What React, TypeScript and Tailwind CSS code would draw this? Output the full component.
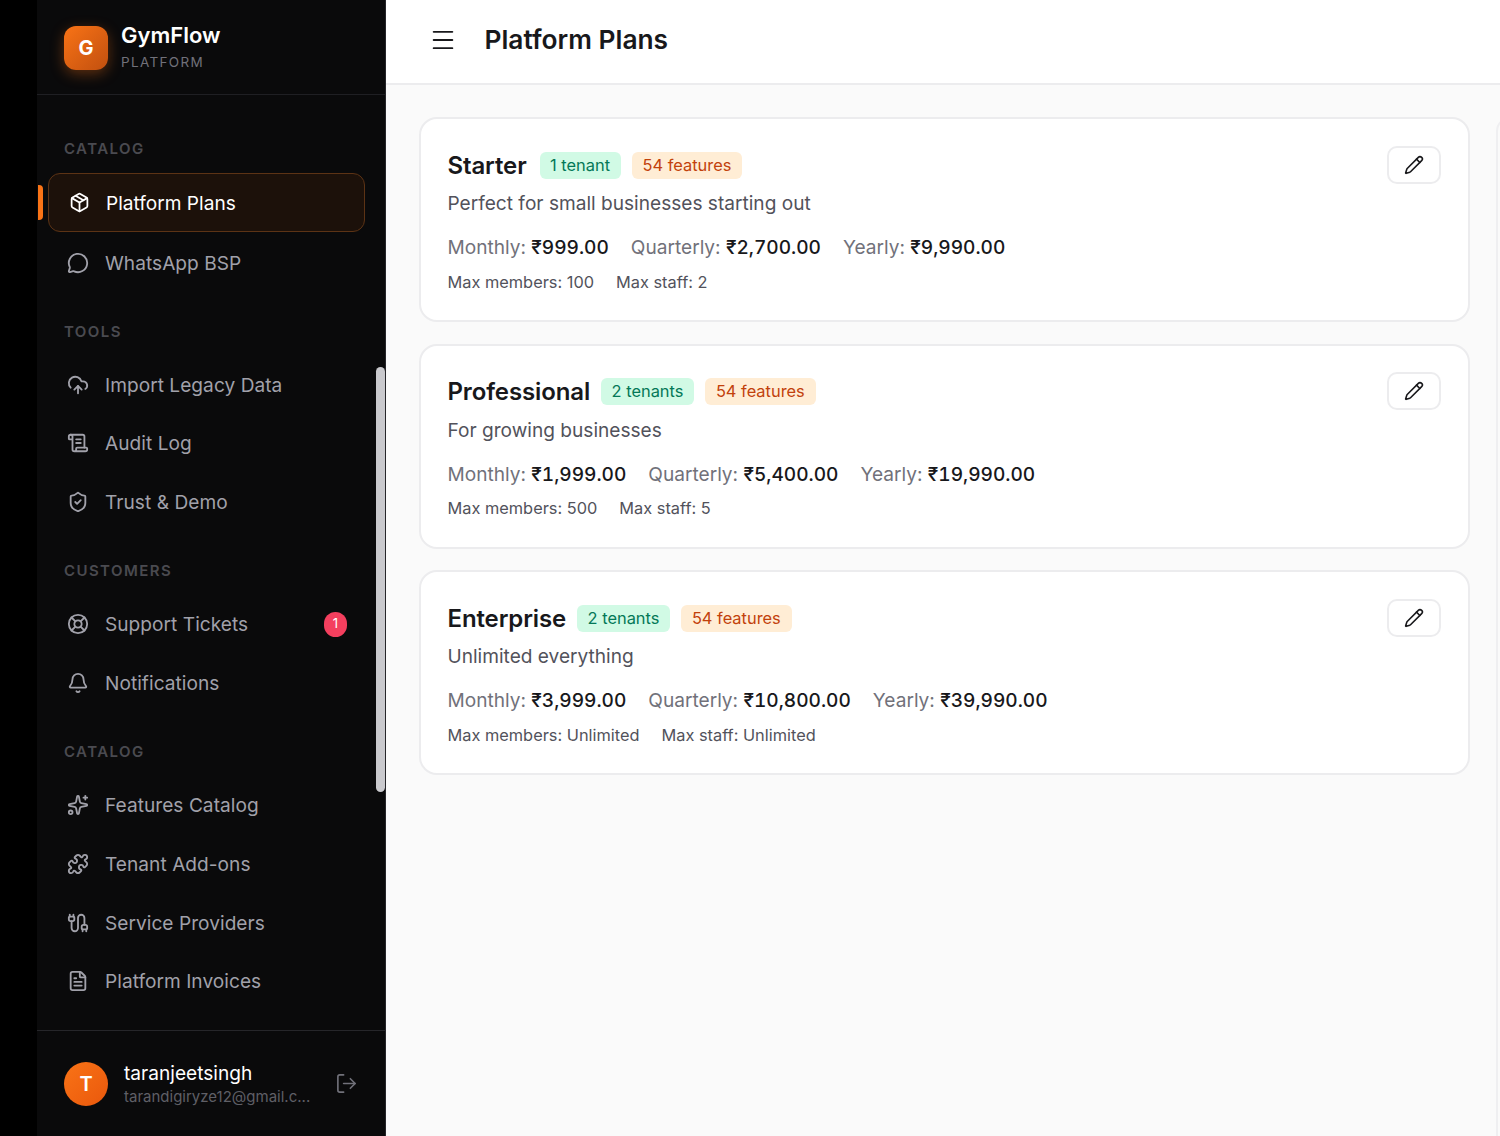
import { Package, MessageCircle, CloudUpload, ScrollText, ShieldCheck, LifeBuoy, Bell, Sparkles, Puzzle, Cable, FileText, LogOut, Pencil, Menu } from "lucide-react";

const font = { fontFamily: "Inter, sans-serif" };

function Label({ children, className }: { children: string; className: string }) {
  return <div className={"pl-[27px] text-[15px] leading-[20px] font-semibold tracking-[0.095em] text-[#4a4a50] " + className}>{children}</div>;
}

function Item({ icon: Icon, label, badge }: { icon: any; label: string; badge?: string }) {
  return (
    <div className="mx-[11px] flex h-[58.6px] w-[317px] shrink-0 items-center pl-[19px] pr-[18px] text-[#a1a1aa]">
      <Icon size={22} strokeWidth={2} className="shrink-0" />
      <span className="ml-[16px] flex-1 text-[19.1px] leading-[28px] tracking-[0.002em]">{label}</span>
      {badge && <span className="flex h-[25px] w-[23px] items-center justify-center rounded-full bg-[#f43f5e] text-[13px] text-white">{badge}</span>}
    </div>
  );
}

function Plan({ name, tenants, desc, m, q, y, mem, staff }: { name: string; tenants: string; desc: string; m: string; q: string; y: string; mem: string; staff: string }) {
  return (
    <div className="relative h-[205px] w-[1051px] shrink-0 rounded-[18px] border-2 border-[#ececee] bg-white pl-[27px] pt-[31.5px]">
      <div className="flex h-[29px] items-center">
        <span className="text-[24px] font-semibold leading-[29px] tracking-[-0.005em] text-[#18181b]">{name}</span>
        <span className={(name === "Starter" ? "ml-[13px]" : "ml-[11px]") + " flex h-[27px] items-center rounded-[6px] bg-[#d1fae5] px-[10.5px] text-[16.4px] text-[#047857]"}>{tenants}</span>
        <span className="ml-[11px] flex h-[27px] items-center rounded-[6px] bg-[#ffedd5] px-[11px] text-[16.4px] text-[#c2410c]">54 features</span>
      </div>
      <div className="mt-[9.8px] text-[19.1px] leading-[28px] text-[#52525b]">{desc}</div>
      <div className="mt-[16px] flex gap-[22px] text-[19.1px] leading-[28px] text-[#71717a]">
        <span>Monthly: <span className="font-medium tabular-nums text-[#18181b]">{m}</span></span>
        <span>Quarterly: <span className="font-medium tabular-nums text-[#18181b]">{q}</span></span>
        <span>Yearly: <span className="font-medium tabular-nums text-[#18181b]">{y}</span></span>
      </div>
      <div className="mt-[8.7px] flex gap-[22px] text-[16.35px] leading-[24px] text-[#52525b]">
        <span>Max members: {mem}</span>
        <span>Max staff: {staff}</span>
      </div>
      <button className="absolute right-[27px] top-[26.7px] flex h-[38px] w-[54px] items-center justify-center rounded-[10px] border-2 border-[#ececee] bg-white text-[#18181b]">
        <Pencil size={20} strokeWidth={1.9} />
      </button>
    </div>
  );
}

export default function App() {
  return (
    <div style={font} className="flex h-[1136px] w-[1500px] overflow-hidden bg-black">
      <div className="w-[37px] shrink-0 bg-black" />
      <aside className="relative flex h-full w-[348.5px] shrink-0 flex-col border-r border-[#26262a] bg-[#0a0a0b]">
        <div className="flex h-[95px] shrink-0 items-center border-b border-[#1f1f23] pl-[27px]">
          <div className="mt-[1px] flex h-[44px] w-[44px] items-center justify-center rounded-[12px] bg-gradient-to-br from-[#f97316] to-[#c2500f] text-[20px] font-bold text-white shadow-[0_4px_14px_rgba(249,115,22,0.35)]">G</div>
          <div className="ml-[13px] mt-[-3px]">
            <div className="text-[22px] font-semibold leading-[28px] text-white">GymFlow</div>
            <div className="mt-[4px] text-[13.5px] leading-[18px] tracking-[0.1em] text-[#71717a]">PLATFORM</div>
          </div>
        </div>
        <div className="flex flex-1 flex-col overflow-hidden pt-[43.5px]">
          <Label className="mb-[14.5px]">CATALOG</Label>
          <div className="relative mx-[11px] flex h-[59px] w-[317px] shrink-0 items-center rounded-[12px] border border-[#5c3315] bg-[#1c110a] pl-[19.5px] text-white">
            <div className="absolute left-[-11px] top-[11px] h-[35px] w-[5px] rounded-r-[4px] bg-[#f97316]" />
            <Package size={21} strokeWidth={2} />
            <span className="ml-[16.5px] text-[19.1px] leading-[28px]">Platform Plans</span>
          </div>
          <div className="mt-[2px]">
            <Item icon={MessageCircle} label="WhatsApp BSP" />
          </div>
          <Label className="mb-[14px] mt-[29px]">TOOLS</Label>
          <Item icon={CloudUpload} label="Import Legacy Data" />
          <Item icon={ScrollText} label="Audit Log" />
          <Item icon={ShieldCheck} label="Trust & Demo" />
          <Label className="mb-[14px] mt-[29.5px]">CUSTOMERS</Label>
          <Item icon={LifeBuoy} label="Support Tickets" badge="1" />
          <Item icon={Bell} label="Notifications" />
          <Label className="mb-[14px] mt-[30px]">CATALOG</Label>
          <Item icon={Sparkles} label="Features Catalog" />
          <Item icon={Puzzle} label="Tenant Add-ons" />
          <Item icon={Cable} label="Service Providers" />
          <Item icon={FileText} label="Platform Invoices" />
        </div>
        <div className="flex h-[106px] shrink-0 items-center border-t border-[#26262a] pl-[27px]">
          <div className="flex h-[44px] w-[44px] items-center justify-center rounded-full bg-gradient-to-br from-[#f97316] to-[#ea580c] text-[20px] font-semibold text-white">T</div>
          <div className="ml-[16px] w-[190px]">
            <div className="text-[19.1px] leading-[26px] text-white">taranjeetsingh</div>
            <div className="text-[15px] leading-[22px] text-[#5f5f66]">tarandigiryze12@gmail.c...</div>
          </div>
          <LogOut size={23} strokeWidth={1.7} className="ml-[21px] text-[#71717a]" />
        </div>
        <div className="absolute right-0 top-[367px] h-[425px] w-[9px] rounded-full bg-[#c9c9cd]" />
      </aside>
      <main className="flex h-full min-w-0 flex-1 flex-col bg-[#fafafa]">
        <header className="flex h-[85px] shrink-0 items-center border-b-2 border-[#ececee] bg-white pb-[4px] pl-[43px]">
          <Menu size={28} strokeWidth={1.6} className="text-[#18181b]" />
          <h1 className="ml-[28px] text-[26.3px] font-semibold text-[#18181b]">Platform Plans</h1>
        </header>
        <div className="flex min-h-0 flex-1 gap-[26px] overflow-hidden pl-[33px] pt-[32px]">
          <div className="flex shrink-0 flex-col gap-[21.5px]">
            <Plan name="Starter" tenants="1 tenant" desc="Perfect for small businesses starting out" m="₹999.00" q="₹2,700.00" y="₹9,990.00" mem="100" staff="2" />
            <Plan name="Professional" tenants="2 tenants" desc="For growing businesses" m="₹1,999.00" q="₹5,400.00" y="₹19,990.00" mem="500" staff="5" />
            <Plan name="Enterprise" tenants="2 tenants" desc="Unlimited everything" m="₹3,999.00" q="₹10,800.00" y="₹39,990.00" mem="Unlimited" staff="Unlimited" />
          </div>
          <div className="h-full w-[40px] shrink-0 rounded-tl-[14px] border-l-2 border-t-2 border-[#efeff1]" />
        </div>
      </main>
    </div>
  );
}
